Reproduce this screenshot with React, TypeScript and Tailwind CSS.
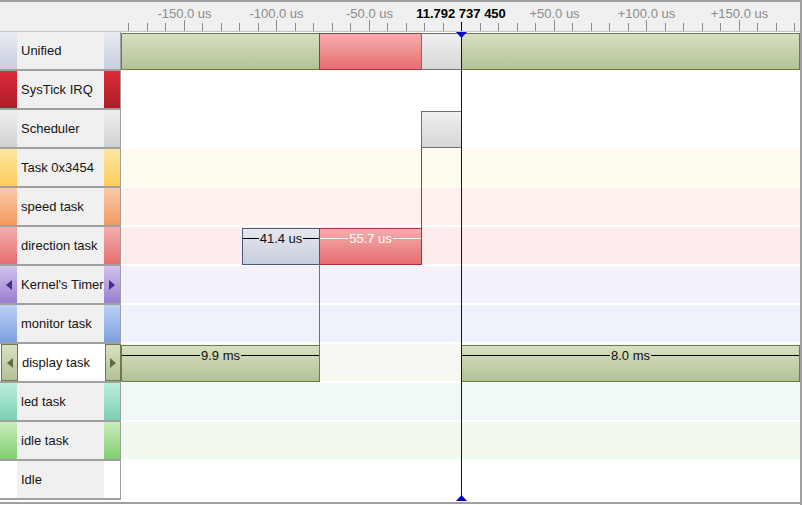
import React from "react";

type Row = {
  name: string;
  strip: string;
  mid: string;
  track: string;
  arrows?: string;
  bordered?: boolean;
};

const rows: Row[] = [
  { name: "Unified", strip: "bg-linear-to-b from-[#e8eaf0] to-[#c8cfdf]", mid: "bg-[#f0f0f0]", track: "bg-white" },
  { name: "SysTick IRQ", strip: "bg-linear-to-b from-[#de2b3a] to-[#ad1c28]", mid: "bg-[#f0f0f0]", track: "bg-white" },
  { name: "Scheduler", strip: "bg-linear-to-b from-[#eeeeee] to-[#d2d2d2]", mid: "bg-[#f0f0f0]", track: "bg-white" },
  { name: "Task 0x3454", strip: "bg-linear-to-b from-[#fde6a0] to-[#fccd58]", mid: "bg-[#f0f0f0]", track: "bg-[#fffbee]" },
  { name: "speed task", strip: "bg-linear-to-b from-[#f9cbaa] to-[#f3985c]", mid: "bg-[#f0f0f0]", track: "bg-[#fdf2eb]" },
  { name: "direction task", strip: "bg-linear-to-b from-[#f3adad] to-[#e66d70]", mid: "bg-[#f0f0f0]", track: "bg-[#fcecec]" },
  { name: "Kernel's Timer", strip: "bg-linear-to-b from-[#d2c4ec] to-[#9a7ecf]", mid: "bg-[#f0f0f0]", track: "bg-[#f4f1fa]", arrows: "#4b2c8c" },
  { name: "monitor task", strip: "bg-linear-to-b from-[#bcd0f3] to-[#7ca0e0]", mid: "bg-[#f0f0f0]", track: "bg-[#eef3fb]" },
  { name: "display task", strip: "bg-linear-to-b from-[#d8e0c4] to-[#b4c296]", mid: "bg-white", track: "bg-[#f6f8f1]", arrows: "#5e6e3e", bordered: true },
  { name: "led task", strip: "bg-linear-to-b from-[#bcecdd] to-[#7ad0b6]", mid: "bg-[#f0f0f0]", track: "bg-[#f0f9f5]" },
  { name: "idle task", strip: "bg-linear-to-b from-[#c9ecbb] to-[#80cf70]", mid: "bg-[#f0f0f0]", track: "bg-[#f1f9ee]" },
  { name: "Idle", strip: "bg-white", mid: "bg-[#f0f0f0]", track: "bg-white" },
];

const GREEN = "bg-linear-to-b from-[#d7e0c2] to-[#b3c295] border border-[#6b7b4b]";
const RED = "bg-linear-to-b from-[#f3adad] to-[#e66c70] border border-[#b0303a]";
const GRAY = "bg-linear-to-b from-[#f0f0f0] to-[#d6d6d6] border border-[#707070]";
const BLUE = "bg-linear-to-b from-[#e6e8ee] to-[#c6cddc] border border-[#4a5a78]";

type Bar = { left: number; width: number; cls: string; label?: string; light?: boolean };

const bars: Record<number, Bar[]> = {
  0: [
    { left: 0, width: 199, cls: GREEN },
    { left: 198, width: 103, cls: RED },
    { left: 300, width: 41, cls: GRAY },
    { left: 340, width: 339, cls: GREEN },
  ],
  2: [{ left: 300, width: 41, cls: GRAY }],
  5: [
    { left: 121, width: 78, cls: BLUE, label: "41.4 us" },
    { left: 198, width: 103, cls: RED, label: "55.7 us", light: true },
  ],
  8: [
    { left: 0, width: 199, cls: GREEN, label: "9.9 ms" },
    { left: 340, width: 339, cls: GREEN, label: "8.0 ms" },
  ],
};

function Arrow({ dir, color }: { dir: "l" | "r"; color: string }) {
  return (
    <svg width="6" height="10" viewBox="0 0 6 10">
      {dir === "l" ? <polygon points="6,0 0,5 6,10" fill={color} /> : <polygon points="0,0 6,5 0,10" fill={color} />}
    </svg>
  );
}

function BarLabel({ text, light }: { text: string; light?: boolean }) {
  return (
    <div className="flex items-center h-[13px] mt-[3px]">
      <div className={`flex-1 h-px ${light ? "bg-white" : "bg-black"}`} />
      <span className={`px-[1px] text-[13px] leading-[13px] ${light ? "text-white" : "text-[#111]"}`}>{text}</span>
      <div className={`flex-1 h-px ${light ? "bg-white" : "bg-black"}`} />
    </div>
  );
}

const ticks = Array.from({ length: 37 }, (_, i) => i - 18);
const labels = [
  { k: -15, t: "-150.0 us" },
  { k: -10, t: "-100.0 us" },
  { k: -5, t: "-50.0 us" },
  { k: 5, t: "+50.0 us" },
  { k: 10, t: "+100.0 us" },
  { k: 15, t: "+150.0 us" },
];

export default function App() {
  return (
    <div
      className="relative w-[802px] h-[505px] bg-white overflow-hidden border-t-2 border-r-2 border-[#a0a0a0] flex flex-col"
      style={{ fontFamily: '"Liberation Sans", Arial, sans-serif' }}
    >
      {/* header */}
      <div className="relative h-[30px] shrink-0 bg-[#f0f0f0] border-b border-[#c4c4c4]">
        {ticks.map((k) => {
          const x = 461 + k * 18.5;
          const major = k % 5 === 0 && k !== 0;
          return (
            <div
              key={k}
              className={`absolute bottom-0 w-px ${k === 0 ? "bg-black h-[9px]" : major ? "bg-[#8c8c8c] h-[11px]" : "bg-[#8c8c8c] h-[8px]"}`}
              style={{ left: Math.round(x) }}
            />
          );
        })}
        {labels.map((l) => (
          <div
            key={l.k}
            className="absolute top-[5px] w-[80px] -ml-[40px] text-center text-[13px] leading-[14px] text-[#8c8c8c]"
            style={{ left: Math.round(461 + l.k * 18.5) + 0.5 }}
          >
            {l.t}
          </div>
        ))}
        <div className="absolute top-[5px] left-[401px] w-[120px] text-center text-[13px] leading-[14px] font-bold text-black">
          11.792 737 450
        </div>
      </div>

      {/* rows */}
      <div className="flex flex-col">
        {rows.map((r, i) => (
          <div key={r.name} className="flex h-[39px]">
            <div className="flex w-[121px] shrink-0 border-r border-[#a0a0a0]">
              <div className="flex flex-col w-[120px]">
                <div className="flex h-[37px]">
                  <div
                    className={`w-[17px] shrink-0 flex items-center justify-center ${r.strip} ${r.bordered ? "border border-[#6b7b4b] ml-px" : ""}`}
                  >
                    {r.arrows && <Arrow dir="l" color={r.arrows} />}
                  </div>
                  <div
                    className={`w-[87px] shrink-0 overflow-hidden whitespace-nowrap pl-[4px] pt-px flex items-center text-[13px] text-[#141414] ${r.mid}`}
                  >
                    {r.name}
                  </div>
                  <div
                    className={`w-[16px] shrink-0 flex items-center justify-center ${r.strip} ${r.bordered ? "border border-[#6b7b4b]" : ""}`}
                  >
                    {r.arrows && <Arrow dir="r" color={r.arrows} />}
                  </div>
                </div>
                <div className="h-[2px] bg-[#a0a0a0]" />
              </div>
            </div>
            <div className="relative flex-1">
              <div className={`h-[37px] ${r.track}`} />
              {(bars[i] || []).map((b, j) => (
                <div
                  key={j}
                  className={`absolute top-[1px] h-[37px] ${b.cls}`}
                  style={{ left: b.left, width: b.width }}
                >
                  {b.label && <BarLabel text={b.label} light={b.light} />}
                </div>
              ))}
            </div>
          </div>
        ))}
      </div>
      <div className="h-[2px] bg-white" />
      <div className="h-[2px] bg-[#a0a0a0]" />

      {/* connectors */}
      <div className="absolute left-[421px] top-[146px] w-px h-[80px] bg-[#b0303a]" />
      <div className="absolute left-[319px] top-[262px] w-px h-[81px] bg-[#6b7b4b]" />

      {/* cursor */}
      <div className="absolute left-[461px] top-[30px] w-px h-[468px] bg-[#0000c8]" />
      <svg className="absolute left-[456px] top-[30px]" width="11" height="7" viewBox="0 0 11 7">
        <polygon points="0,0 11,0 5.5,6" fill="#0000c8" />
      </svg>
      <svg className="absolute left-[456px] top-[492px]" width="11" height="7" viewBox="0 0 11 7">
        <polygon points="0,7 11,7 5.5,1" fill="#0000c8" />
      </svg>
    </div>
  );
}
